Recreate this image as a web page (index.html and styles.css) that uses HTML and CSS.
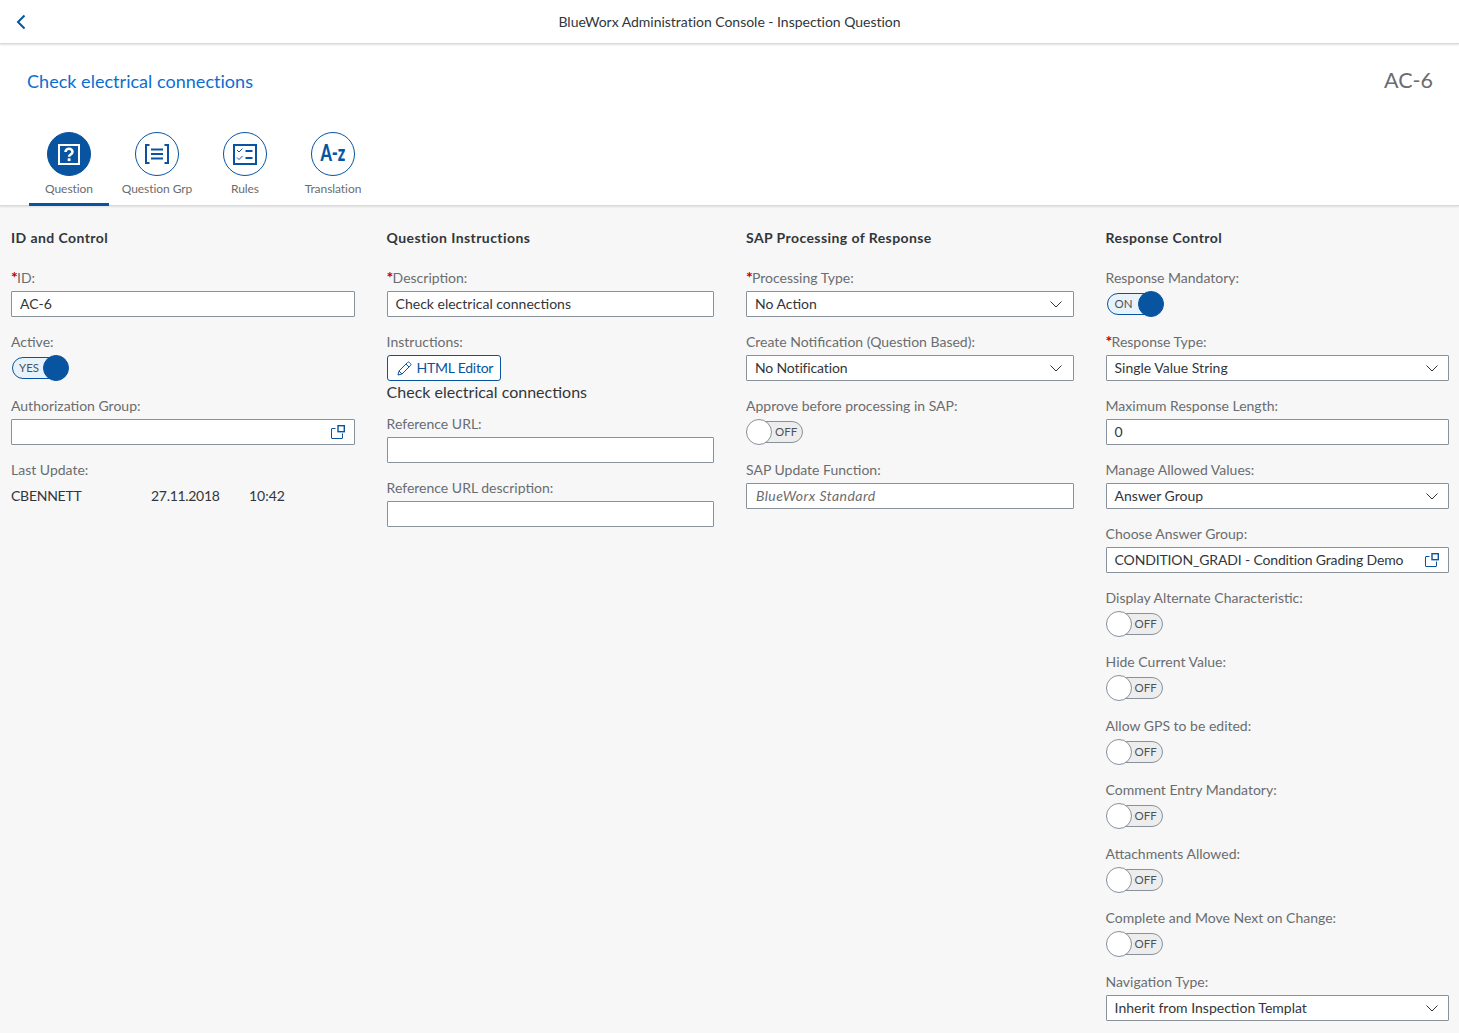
FILE: index.html
```html
<!DOCTYPE html>
<html lang="en">
<head>
<meta charset="utf-8">
<title>BlueWorx Administration Console - Inspection Question</title>
<link rel="stylesheet" href="styles.css">
</head>
<body>
<svg class="defs" width="0" height="0" aria-hidden="true">
  <symbol id="value-help" viewBox="0 0 14 14">
    <path d="M4.500 3.500H1a.5.5 0 0 0-.5.5v9a.5.5 0 0 0 .5.5h10a.5.5 0 0 0 .5-.5V8.500" fill="none" stroke="currentColor" stroke-width="1"/>
    <rect x="7" y="0.700" width="6.300" height="6" fill="none" stroke="currentColor" stroke-width="1.400"/>
  </symbol>
  <symbol id="chevron" viewBox="0 0 12 7">
    <path d="M0.500 0.500 6 6l5.500-5.500" fill="none" stroke="currentColor" stroke-width="1"/>
  </symbol>
</svg>
<header class="shell">
  <button class="back" aria-label="Back">
    <svg width="10" height="16" viewBox="0 0 10 16"><path d="M8.500 1.500 2 8l6.500 6.500" fill="none" stroke="currentColor" stroke-width="2"/></svg>
  </button>
  <div class="shell-title">BlueWorx Administration Console - Inspection Question</div>
</header>
<section class="object-head">
  <div class="title-row">
    <h1 class="object-title">Check electrical connections</h1>
    <div class="object-id">AC-6</div>
  </div>
  <nav class="tabs">
    <div class="tab tab-active">
      <span class="tab-icon">
        <svg width="22" height="21" viewBox="0 0 22 21"><rect x="1" y="1" width="20" height="19" fill="none" stroke="currentColor" stroke-width="2"/><path d="M7.500 8c0-2 1.500-3.200 3.500-3.200s3.500 1.200 3.500 3c0 1.500-.9 2.200-2 2.800-.9.500-1.400 1-1.400 2.200" fill="none" stroke="currentColor" stroke-width="2.600"/><rect x="9.700" y="14.300" width="2.800" height="2.800" fill="currentColor"/></svg>
      </span>
      <span class="tab-label">Question</span>
    </div>
    <div class="tab">
      <span class="tab-icon">
        <svg width="24" height="20" viewBox="0 0 24 20"><path d="M4.500 1H1v18h3.500M19.500 1H23v18h-3.500" fill="none" stroke="currentColor" stroke-width="2"/><path d="M6 5.500h12M6 10h12M6 14.500h12" stroke="currentColor" stroke-width="2"/></svg>
      </span>
      <span class="tab-label">Question Grp</span>
    </div>
    <div class="tab">
      <span class="tab-icon">
        <svg width="24" height="21" viewBox="0 0 24 21"><rect x="1" y="1" width="22" height="19" fill="none" stroke="currentColor" stroke-width="2"/><path d="M4 6l2 2 3.500-3.500M4 13.500l2 2 3.500-3.500" fill="none" stroke="currentColor" stroke-width="1"/><path d="M12.500 7h7M12.500 14h7" stroke="currentColor" stroke-width="2"/></svg>
      </span>
      <span class="tab-label">Rules</span>
    </div>
    <div class="tab">
      <span class="tab-icon"><span class="tab-icon-text">A-z</span></span>
      <span class="tab-label">Translation</span>
    </div>
  </nav>
</section>
<main class="form">
  <section class="col">
    <h2 class="col-title">ID and Control</h2>
    <div class="field"><label class="label"><span class="req">*</span>ID:</label><div class="input">AC-6</div></div>
    <div class="field"><label class="label">Active:</label><div class="toggle toggle-on"><span class="track">YES</span><span class="knob"></span></div></div>
    <div class="field"><label class="label">Authorization Group:</label><div class="input"><span class="value"></span><svg class="help"><use href="#value-help"/></svg></div></div>
    <div class="field"><label class="label">Last Update:</label>
      <div class="update"><span class="update-user">CBENNETT</span><span class="update-date">27.11.2018</span><span>10:42</span></div>
    </div>
  </section>
  <section class="col">
    <h2 class="col-title">Question Instructions</h2>
    <div class="field"><label class="label"><span class="req">*</span>Description:</label><div class="input">Check electrical connections</div></div>
    <div class="field field-tight"><label class="label">Instructions:</label>
      <button class="btn"><svg width="15" height="15" viewBox="0 0 15 15"><path d="M1 14l1-4L10.500 1.500a1.400 1.400 0 0 1 2 0l1 1a1.400 1.400 0 0 1 0 2L5 13zM2 10l3 3M9 3l3 3" fill="none" stroke="currentColor" stroke-width="1"/></svg>HTML Editor</button>
      <div class="plain">Check electrical connections</div>
    </div>
    <div class="field"><label class="label">Reference URL:</label><div class="input"></div></div>
    <div class="field"><label class="label">Reference URL description:</label><div class="input"></div></div>
  </section>
  <section class="col">
    <h2 class="col-title">SAP Processing of Response</h2>
    <div class="field"><label class="label"><span class="req">*</span>Processing Type:</label><div class="input"><span class="value">No Action</span><svg class="chev"><use href="#chevron"/></svg></div></div>
    <div class="field"><label class="label">Create Notification (Question Based):</label><div class="input"><span class="value value-tight">No Notification</span><svg class="chev"><use href="#chevron"/></svg></div></div>
    <div class="field"><label class="label">Approve before processing in SAP:</label><div class="toggle"><span class="track">OFF</span><span class="knob"></span></div></div>
    <div class="field"><label class="label">SAP Update Function:</label><div class="input input-ph">BlueWorx Standard</div></div>
  </section>
  <section class="col">
    <h2 class="col-title">Response Control</h2>
    <div class="field"><label class="label">Response Mandatory:</label><div class="toggle toggle-on"><span class="track">ON</span><span class="knob"></span></div></div>
    <div class="field"><label class="label"><span class="req">*</span>Response Type:</label><div class="input"><span class="value">Single Value String</span><svg class="chev"><use href="#chevron"/></svg></div></div>
    <div class="field"><label class="label">Maximum Response Length:</label><div class="input">0</div></div>
    <div class="field"><label class="label">Manage Allowed Values:</label><div class="input"><span class="value">Answer Group</span><svg class="chev"><use href="#chevron"/></svg></div></div>
    <div class="field"><label class="label">Choose Answer Group:</label><div class="input"><span class="value value-tight">CONDITION_GRADI - Condition Grading Demo</span><svg class="help"><use href="#value-help"/></svg></div></div>
    <div class="field"><label class="label">Display Alternate Characteristic:</label><div class="toggle"><span class="track">OFF</span><span class="knob"></span></div></div>
    <div class="field"><label class="label">Hide Current Value:</label><div class="toggle"><span class="track">OFF</span><span class="knob"></span></div></div>
    <div class="field"><label class="label">Allow GPS to be edited:</label><div class="toggle"><span class="track">OFF</span><span class="knob"></span></div></div>
    <div class="field"><label class="label">Comment Entry Mandatory:</label><div class="toggle"><span class="track">OFF</span><span class="knob"></span></div></div>
    <div class="field"><label class="label">Attachments Allowed:</label><div class="toggle"><span class="track">OFF</span><span class="knob"></span></div></div>
    <div class="field"><label class="label">Complete and Move Next on Change:</label><div class="toggle"><span class="track">OFF</span><span class="knob"></span></div></div>
    <div class="field"><label class="label">Navigation Type:</label><div class="input"><span class="value">Inherit from Inspection Templat</span><svg class="chev"><use href="#chevron"/></svg></div></div>
  </section>
</main>
</body>
</html>
```
FILE: styles.css
```css
* { box-sizing: border-box; }
html, body { margin: 0; height: 1033px; overflow: hidden; }
body {
  background: #f7f7f7;
  color: #32363a;
  font-family: Lato, "Liberation Sans", sans-serif;
  font-size: 14px;
}
.defs { position: absolute; }
.shell {
  height: 44px;
  background: #fff;
  border-bottom: 1px solid #d9d9d9;
  box-shadow: 0 1px 2px rgba(0,0,0,.12);
  display: grid;
  grid-template-columns: 1fr auto 1fr;
  align-items: center;
  position: relative;
  z-index: 2;
}
.back { border: 0; background: none; padding: 0 0 0 16px; color: #0854a0; display: flex; }
.shell-title { font-size: 14px; letter-spacing: -.02px; }
.object-head {
  background: #fff;
  height: 162px;
  border-bottom: 1px solid #d9d9d9;
  box-shadow: 0 1px 2px rgba(0,0,0,.1);
  position: relative;
}
.title-row {
  display: flex;
  justify-content: space-between;
  align-items: center;
  padding: 0 26px 0 27px;
  height: 76px;
}
.object-title { margin: 0 0 2px; font-size: 18px; font-weight: 400; color: #0a6ed1; letter-spacing: .03px; }
.object-id { font-size: 21.500px; color: #6a6d70; margin-bottom: 4px; }
.tabs { display: flex; gap: 8px; padding: 12px 0 0 29px; }
.tab {
  width: 80px;
  height: 74px;
  display: flex;
  flex-direction: column;
  align-items: center;
}
.tab-active { border-bottom: 3px solid #0854a0; }
.tab-icon {
  width: 44px;
  height: 44px;
  border-radius: 50%;
  border: 1px solid #0854a0;
  color: #0854a0;
  display: flex;
  align-items: center;
  justify-content: center;
  flex: none;
}
.tab-active .tab-icon { background: #0854a0; color: #fff; }
.tab-icon-text { display: inline-block; font-weight: 900; font-size: 22px; line-height: 22px; margin-bottom: 2px; transform: scaleX(.74); }
.tab-label { font-size: 12px; letter-spacing: -.06px; color: #6a6d70; margin-top: 4px; white-space: nowrap; line-height: 18px; }
.form {
  display: grid;
  grid-template-columns: 343.600px 327.400px 327.600px 343.400px;
  column-gap: 32px;
  padding: 0 10px 0 11px;
}
.col-title { margin: 0; height: 59px; padding-top: 22px; font-size: 14px; font-weight: 700; line-height: 19px; letter-spacing: .42px; }
.field { margin-bottom: 12px; }
.field-tight { margin-bottom: 6px; }
.label { display: block; height: 26px; line-height: 26px; color: #6a6d70; white-space: nowrap; }
.req { color: #bb0000; font-weight: 700; font-size: 16px; line-height: 1; letter-spacing: -.8px; }
.input {
  height: 26px;
  background: #fff;
  border: 1px solid #89919a;
  border-radius: 1px;
  padding: 0 8px 2px;
  display: flex;
  align-items: center;
  justify-content: space-between;
  white-space: nowrap;
}
.input-ph { color: #6a6d70; font-style: italic; letter-spacing: .45px; padding-left: 9px; }
.value-tight { letter-spacing: -.15px; }
.chev { width: 12px; height: 7px; color: #32363a; margin: 2px 2.400px 0 0; flex: none; }
.help { width: 14px; height: 14px; color: #0854a0; flex: none; margin: 2px 1px 0 0; }
.toggle { position: relative; width: 58px; height: 26px; }
.track {
  position: absolute;
  top: 2px;
  left: 3px;
  width: 54px;
  height: 22px;
  border-radius: 11px;
  border: 1px solid #89919a;
  background: #ededed;
  color: #4f5255;
  font-size: 11.500px;
  line-height: 20px;
  padding-left: 25px;
}
.knob {
  position: absolute;
  top: 0;
  left: 0;
  width: 26px;
  height: 26px;
  border-radius: 50%;
  background: #fff;
  border: 1px solid #89919a;
}
.toggle-on .track { left: 1px; background: #e8f2fb; border-color: #0854a0; padding: 0 20px 0 0; text-align: center; }
.toggle-on .knob { left: 32px; background: #0854a0; border-color: #0854a0; }
.update { display: flex; height: 26px; align-items: center; padding-bottom: 2px; }
.update-user { width: 140px; letter-spacing: -.25px; }
.update-date { width: 98px; letter-spacing: -.3px; }
.btn {
  display: flex;
  align-items: center;
  gap: 5px;
  height: 26px;
  width: 114px;
  padding: 0 0 2px 9px;
  background: #fff;
  border: 1px solid #0854a0;
  border-radius: 3px;
  color: #0854a0;
  font: inherit;
  letter-spacing: -.25px;
}
.btn svg { margin-top: 2px; }
.plain { height: 24px; line-height: 22px; font-size: 16px; }
```
